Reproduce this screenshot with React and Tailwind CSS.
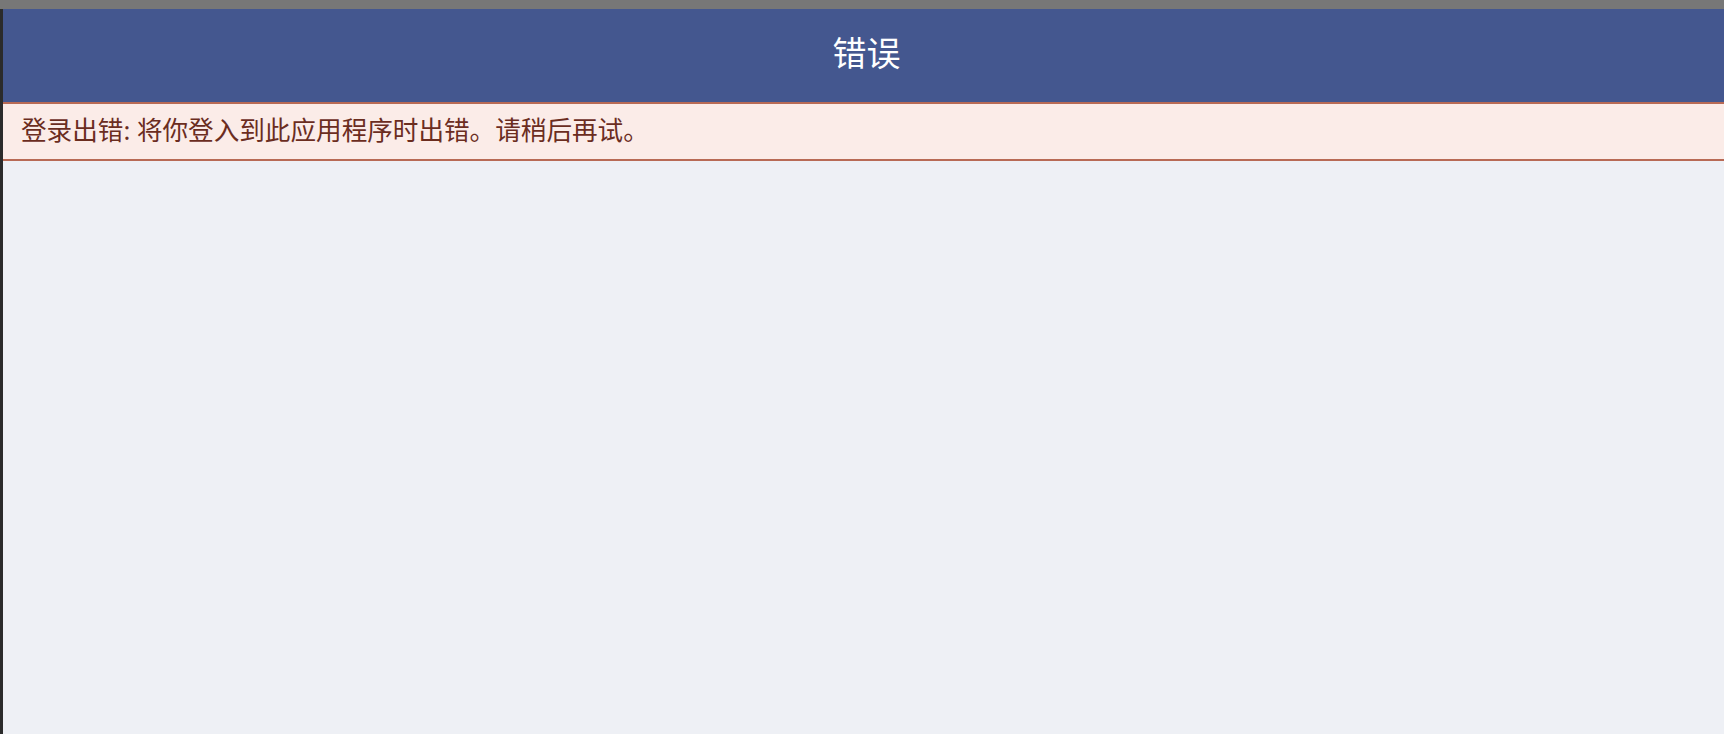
const ErrorPage = () => {
  return (
    <div
      className="flex h-[734px] w-full flex-col overflow-hidden bg-[#777777]"
      style={{ fontFamily: '"Noto Sans", "Noto Sans CJK SC", sans-serif' }}
    >
      <div className="h-[9px] shrink-0" />
      <div className="flex flex-1">
        <div className="w-[3px] shrink-0 bg-[#2b2b2b]" />
        <div className="flex flex-1 flex-col bg-[#eef0f5]">
          <header className="flex h-[93px] items-center justify-center bg-[#44578f] pb-[4px] pl-[6px]">
            <h1 className="text-[34px] font-normal text-white">错误</h1>
          </header>
          <div className="flex h-[59px] items-center border-y-2 border-[#b86a55] bg-[#fbece8] pl-[18px]">
            <p className="text-[25.6px] text-[#6b2d1f]">登录出错: 将你登入到此应用程序时出错。请稍后再试。</p>
          </div>
          <main className="flex-1" />
        </div>
      </div>
    </div>
  );
};

export default function App() {
  return <ErrorPage />;
}
